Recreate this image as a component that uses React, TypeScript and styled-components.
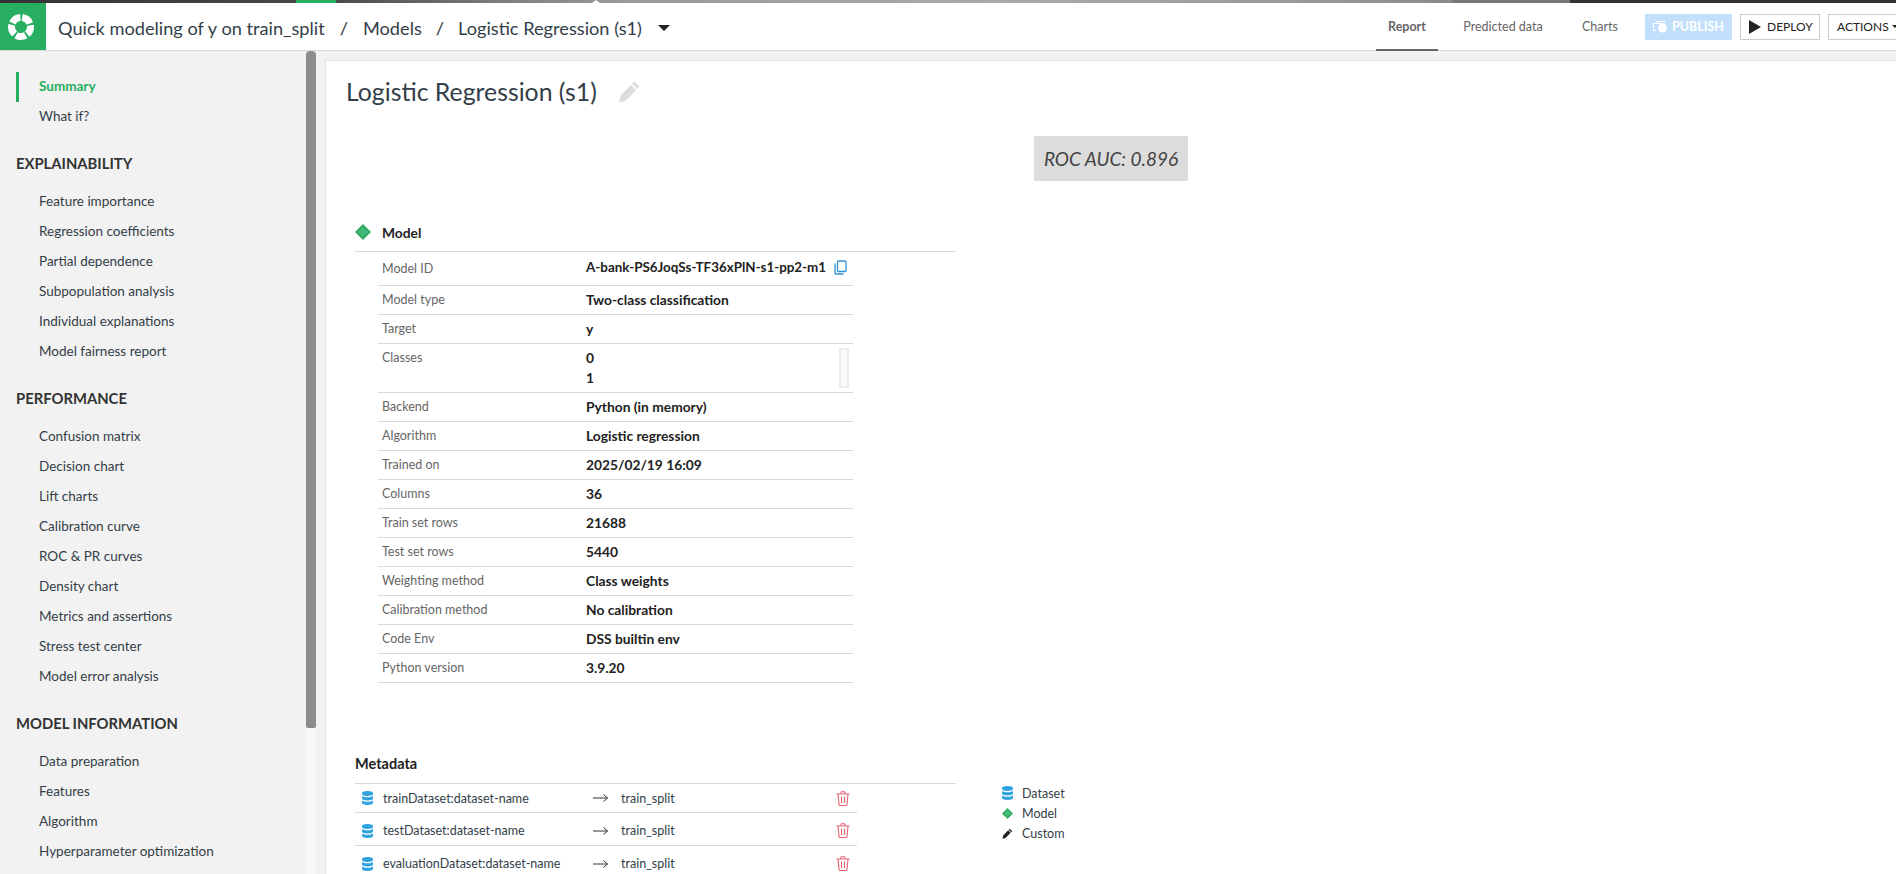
import React from "react";
import styled, { createGlobalStyle } from "styled-components";

const FONT = `"Lato", "Noto Sans", "Liberation Sans", sans-serif`;

const Global = createGlobalStyle`
  html, body { margin: 0; padding: 0; height: 100%; overflow: hidden; background: #f2f2f2; }
  body { font-family: ${FONT}; color: #333e48; }
  * { box-sizing: border-box; }
`;

const Page = styled.div`
  width: 1896px;
  height: 874px;
  display: flex;
  flex-direction: column;
  overflow: hidden;
`;

const TopStrip = styled.div`
  height: 3px;
  flex: none;
  position: relative;
  background: linear-gradient(
    90deg,
    #333 0,
    #4a4a4a 336px,
    #7d7d7d 500px,
    #999 620px,
    #aaa 1000px,
    #999 1300px,
    #8a8a8a 1452px,
    #777 1452px,
    #777 1570px,
    #333 1570px,
    #333 100%
  );
`;

const StripGreen = styled.div`
  position: absolute;
  left: 296px;
  top: 0;
  width: 40px;
  height: 3px;
  background: #28ae60;
`;

const StripNotch = styled.div`
  position: absolute;
  left: 592px;
  top: 0;
  width: 0;
  height: 0;
  border-left: 4px solid transparent;
  border-right: 4px solid transparent;
  border-bottom: 3px solid #fff;
`;

const Header = styled.header`
  height: 48px;
  flex: none;
  background: #fff;
  border-bottom: 1px solid #d9d9d9;
  display: flex;
  align-items: stretch;
`;

const Logo = styled.div`
  width: 46px;
  background: #28ae60;
  display: flex;
  align-items: center;
  justify-content: center;
  padding-right: 4px;
`;

const Crumbs = styled.div`
  display: flex;
  align-items: center;
  margin-left: 12px;
  padding-top: 2px;
  font-size: 18.2px;
  color: #333e48;
`;

const Sep = styled.span<{ $m: number }>`
  margin: 0 ${(p) => p.$m}px;
`;

const Caret = styled.span`
  width: 0;
  height: 0;
  margin-left: 16px;
  border-left: 6px solid transparent;
  border-right: 6px solid transparent;
  border-top: 6px solid #222;
`;

const Spacer = styled.div`
  flex: 1;
`;

const Tabs = styled.nav`
  display: flex;
  align-items: stretch;
  height: 48px;
  margin-bottom: -1px;
  position: relative;
`;

const Tab = styled.div<{ $active?: boolean; $w: number }>`
  display: flex;
  align-items: center;
  justify-content: center;
  width: ${(p) => p.$w}px;
  font-size: 12.5px;
  font-weight: ${(p) => (p.$active ? 700 : 400)};
  color: #666;
  border-bottom: 2px solid ${(p) => (p.$active ? "#666" : "transparent")};
`;

const Actions = styled.div`
  display: flex;
  align-items: center;
  gap: 8px;
  margin-left: 13px;
  width: 251px;
  flex: none;
  overflow: hidden;
`;

const Publish = styled.div`
  width: 87px;
  height: 26px;
  flex: none;
  background: #c2dffc;
  color: #fff;
  font-size: 12.5px;
  font-weight: 700;
  display: flex;
  align-items: center;
  justify-content: center;
  gap: 4px;
`;

const OutlineButton = styled.div<{ $w: number }>`
  width: ${(p) => p.$w}px;
  height: 26px;
  flex: none;
  border: 1px solid #ccc;
  background: #fff;
  color: #222;
  font-size: 12px;
  display: flex;
  align-items: center;
  gap: 6px;
  padding-left: 8px;
  white-space: nowrap;
`;

const SmallCaret = styled.span`
  width: 0;
  height: 0;
  margin-left: -3px;
  border-left: 3px solid transparent;
  border-right: 3px solid transparent;
  border-top: 3px solid #222;
`;

const Body = styled.div`
  flex: 1;
  min-height: 0;
  display: flex;
`;

const Sidebar = styled.aside`
  width: 316px;
  flex: none;
  position: relative;
  padding: 21px 0 0 16px;
  overflow: hidden;
`;

const ScrollThumb = styled.div`
  position: absolute;
  top: 0;
  right: 0;
  width: 10px;
  height: 677px;
  background: #8c8c8c;
  border-radius: 4px 4px 2px 2px;
`;

const ScrollTrack = styled.div`
  position: absolute;
  top: 677px;
  bottom: 0;
  right: 0;
  width: 10px;
  background: #f8f8f8;
`;

const NavItem = styled.div<{ $active?: boolean }>`
  height: 30px;
  display: flex;
  align-items: center;
  padding: 0 0 2px 20px;
  font-size: 13.5px;
  font-weight: ${(p) => (p.$active ? 700 : 400)};
  color: ${(p) => (p.$active ? "#28ae60" : "#333e48")};
  border-left: 3px solid ${(p) => (p.$active ? "#28ae60" : "transparent")};
`;

const NavGroup = styled.div`
  margin-bottom: 19px;
`;

const NavTitle = styled.div`
  font-size: 14.8px;
  font-weight: 700;
  color: #333;
  height: 24px;
  line-height: 24px;
  margin-bottom: 12px;
`;

const Main = styled.main`
  flex: 1;
  min-width: 0;
  margin: 9px 0 0 9px;
  background: #fff;
  border-left: 1px solid #e3e3e3;
  border-top: 1px solid #e3e3e3;
  padding: 0 0 0 20px;
  overflow: hidden;
  position: relative;
`;

const TitleRow = styled.div`
  display: flex;
  align-items: center;
  gap: 21px;
  height: 49px;
  margin-top: 6px;
`;

const Title = styled.h1`
  margin: 0;
  font-size: 24.8px;
  font-weight: 400;
  color: #333e48;
`;

const ScoreRow = styled.div`
  display: flex;
  margin: 20px 0 0 688px;
`;

const Score = styled.div`
  width: 154px;
  height: 45px;
  background: #dcdcdc;
  display: flex;
  align-items: center;
  justify-content: center;
  font-style: italic;
  font-size: 19px;
  color: #444;
`;

const Section = styled.section`
  margin: 36px 0 0 9px;
  width: 601px;
`;

const SectionHead = styled.div`
  display: flex;
  align-items: center;
  gap: 11px;
  height: 35px;
  border-bottom: 1px solid #d9d9d9;
  font-size: 13.8px;
  font-weight: 700;
  color: #222;
  padding-bottom: 4px;
`;

const InfoTable = styled.div`
  margin-left: 23px;
  width: 475px;
`;

const InfoRow = styled.div<{ $h?: number; $top?: number }>`
  display: grid;
  grid-template-columns: 121px 1fr;
  height: ${(p) => p.$h ?? 29}px;
  border-bottom: 1px solid #d9d9d9;
  padding: ${(p) => p.$top ?? 6}px 0 0 4px;
  font-size: 12.5px;
  line-height: 16px;
  position: relative;
`;

const InfoLabel = styled.div`
  color: #666;
  width: 121px;
  white-space: nowrap;
`;

const InfoValue = styled.div`
  font-size: 13.8px;
  font-weight: 700;
  color: #222;
  margin: -2px 0 0 83px;
  white-space: nowrap;
  display: flex;
  flex-direction: column;
  line-height: 20px;
`;

const InlineValue = styled.span`
  display: flex;
  align-items: center;
  gap: 8px;
  margin-top: -2px;
  font-size: 13.4px;
`;

const MiniScroll = styled.div`
  position: absolute;
  right: 4px;
  top: 4px;
  width: 10px;
  height: 40px;
  border: 2px solid #ececec;
  background: #fbfbfb;
`;

const MetaSection = styled.section`
  margin: 71px 0 0 9px;
  display: flex;
  align-items: flex-start;
`;

const MetaMain = styled.div`
  width: 601px;
  flex: none;
`;

const MetaTitle = styled.div`
  font-size: 14.5px;
  font-weight: 700;
  color: #222;
  height: 30px;
  line-height: 20px;
  border-bottom: 1px solid #d9d9d9;
`;

const MetaRow = styled.div<{ $first?: boolean }>`
  width: 502px;
  height: ${(p) => (p.$first ? 29 : 33)}px;
  display: flex;
  align-items: center;
  border-bottom: 1px solid #d9d9d9;
  padding: ${(p) => (p.$first ? 0 : 3)}px 0 0 7px;
  font-size: 12.5px;
  color: #333e48;
`;

const MetaKey = styled.div`
  width: 210px;
  margin-left: 10px;
  white-space: nowrap;
`;

const MetaVal = styled.div`
  margin-left: 13px;
  width: 215px;
`;

const Legend = styled.div`
  margin: 29px 0 0 46px;
  display: flex;
  flex-direction: column;
`;

const LegendItem = styled.div`
  height: 20px;
  display: flex;
  align-items: center;
  gap: 9px;
  font-size: 12.5px;
  color: #333e48;
`;

const Db = () => (
  <svg width="11" height="14" viewBox="0 0 10 14" preserveAspectRatio="none" style={{ flex: "none" }}>
    <path d="M0 2C0 .7 2.200 0 5 0s5 .7 5 2v1c0 1.200-2.200 2-5 2S0 4.200 0 3z" fill="#2fa3e0" />
    <path d="M0 5c1 .9 3 1.300 5 1.300S9 5.900 10 5v2.500c0 1.200-2.200 2-5 2s-5-.8-5-2z" fill="#2fa3e0" />
    <path d="M0 9.500c1 .9 3 1.300 5 1.300s4-.4 5-1.300V12c0 1.200-2.200 2-5 2s-5-.8-5-2z" fill="#2fa3e0" />
  </svg>
);

const Diamond = ({ size = 16 }: { size?: number }) => (
  <svg width={size} height={size} viewBox="0 0 16 16" style={{ flex: "none" }}>
    <path d="M8 0l8 8-8 8-8-8z" fill="#2fae63" />
    <path d="M8 3l5 5-5 5-5-5z" fill="#45b978" />
  </svg>
);

const Trash = () => (
  <svg width="14" height="15" viewBox="0 0 14 15" fill="none" stroke="#e8606f" strokeWidth="1.100" style={{ flex: "none" }}>
    <path d="M.5 3h13M5 3V1.500C5 1 5.300.7 5.800.7h2.400c.5 0 .8.300.8.800V3M2 3l1 10.200c0 .8.500 1.300 1.200 1.300h5.600c.7 0 1.200-.5 1.200-1.300L12 3M5.500 5.500V12M8.500 5.500V12" />
  </svg>
);

const Arrow = () => (
  <svg width="15" height="10" viewBox="0 0 15 10" fill="none" stroke="#333" strokeWidth="1" style={{ flex: "none" }}>
    <path d="M0 5h14.500M10.500 1.500L14.500 5l-4 3.500" />
  </svg>
);

const Pencil = ({ size = 23, color = "#dcdcdc" }: { size?: number; color?: string }) => (
  <svg width={size} height={size} viewBox="0 0 22 22" style={{ flex: "none" }}>
    <path d="M15.500 1.500l5 5-2 2-5-5zM12.300 4.700l5 5L7 20l-6 1.500L2.300 15z" fill={color} />
  </svg>
);

const Copy = () => (
  <svg width="13" height="15" viewBox="0 0 13 15" fill="none" stroke="#2f8fd6" strokeWidth="1.300" style={{ flex: "none" }}>
    <rect x="3.500" y="1" width="8.500" height="10.500" rx="1" />
    <path d="M1 3.500V13c0 .6.400 1 1 1h7.500" />
  </svg>
);

const LogoMark = () => (
  <svg width="26" height="26" viewBox="0 0 26 26" fill="none" stroke="#fff" strokeWidth="7">
    <circle cx="13" cy="13" r="9.500" strokeDasharray="10 1.940" strokeDashoffset="2" />
  </svg>
);

const PublishIcon = () => (
  <svg width="15" height="13" viewBox="0 0 15 13" fill="#fff">
    <path d="M0 3h10v1H1v6h2v1H0z" />
    <path d="M3 1h9v2h-1V2H4v1H3z" />
    <circle cx="9.500" cy="8" r="4.500" />
  </svg>
);

const Play = () => (
  <svg width="12" height="14" viewBox="0 0 12 14" fill="#222" style={{ flex: "none" }}>
    <path d="M0 0l12 7-12 7z" />
  </svg>
);

const nav: { title: string; items: string[] }[] = [
  {
    title: "EXPLAINABILITY",
    items: [
      "Feature importance",
      "Regression coefficients",
      "Partial dependence",
      "Subpopulation analysis",
      "Individual explanations",
      "Model fairness report",
    ],
  },
  {
    title: "PERFORMANCE",
    items: [
      "Confusion matrix",
      "Decision chart",
      "Lift charts",
      "Calibration curve",
      "ROC & PR curves",
      "Density chart",
      "Metrics and assertions",
      "Stress test center",
      "Model error analysis",
    ],
  },
  {
    title: "MODEL INFORMATION",
    items: ["Data preparation", "Features", "Algorithm", "Hyperparameter optimization"],
  },
];

const info: [string, string][] = [
  ["Model type", "Two-class classification"],
  ["Target", "y"],
];

const info2: [string, string][] = [
  ["Backend", "Python (in memory)"],
  ["Algorithm", "Logistic regression"],
  ["Trained on", "2025/02/19 16:09"],
  ["Columns", "36"],
  ["Train set rows", "21688"],
  ["Test set rows", "5440"],
  ["Weighting method", "Class weights"],
  ["Calibration method", "No calibration"],
  ["Code Env", "DSS builtin env"],
  ["Python version", "3.9.20"],
];

const meta = ["trainDataset:dataset-name", "testDataset:dataset-name", "evaluationDataset:dataset-name"];

export default function App() {
  return (
    <Page>
      <Global />
      <TopStrip>
        <StripGreen />
        <StripNotch />
      </TopStrip>
      <Header>
        <Logo>
          <LogoMark />
        </Logo>
        <Crumbs>
          <span>Quick modeling of y on train_split</span>
          <Sep $m={15}>/</Sep>
          <span>Models</span>
          <Sep $m={14}>/</Sep>
          <span>Logistic Regression (s1)</span>
          <Caret />
        </Crumbs>
        <Spacer />
        <Tabs>
          <Tab $active $w={62}>Report</Tab>
          <Tab $w={130}>Predicted data</Tab>
          <Tab $w={64}>Charts</Tab>
        </Tabs>
        <Actions>
          <Publish>
            <PublishIcon />
            PUBLISH
          </Publish>
          <OutlineButton $w={80}>
            <Play />
            DEPLOY
          </OutlineButton>
          <OutlineButton $w={72}>
            ACTIONS
            <SmallCaret />
          </OutlineButton>
        </Actions>
      </Header>
      <Body>
        <Sidebar>
          <NavGroup>
            <NavItem $active>Summary</NavItem>
            <NavItem>What if?</NavItem>
          </NavGroup>
          {nav.map((g) => (
            <NavGroup key={g.title}>
              <NavTitle>{g.title}</NavTitle>
              {g.items.map((i) => (
                <NavItem key={i}>{i}</NavItem>
              ))}
            </NavGroup>
          ))}
          <ScrollThumb />
          <ScrollTrack />
        </Sidebar>
        <Main>
          <TitleRow>
            <Title>Logistic Regression (s1)</Title>
            <Pencil />
          </TitleRow>
          <ScoreRow>
            <Score>ROC AUC: 0.896</Score>
          </ScoreRow>
          <Section>
            <SectionHead>
              <Diamond />
              Model
            </SectionHead>
            <InfoTable>
              <InfoRow $h={34} $top={9}>
                <InfoLabel>Model ID</InfoLabel>
                <InfoValue>
                  <InlineValue>
                    A-bank-PS6JoqSs-TF36xPlN-s1-pp2-m1
                    <Copy />
                  </InlineValue>
                </InfoValue>
              </InfoRow>
              {info.map(([k, v]) => (
                <InfoRow key={k}>
                  <InfoLabel>{k}</InfoLabel>
                  <InfoValue>{v}</InfoValue>
                </InfoRow>
              ))}
              <InfoRow $h={49}>
                <InfoLabel>Classes</InfoLabel>
                <InfoValue>
                  <span>0</span>
                  <span>1</span>
                </InfoValue>
                <MiniScroll />
              </InfoRow>
              {info2.map(([k, v]) => (
                <InfoRow key={k}>
                  <InfoLabel>{k}</InfoLabel>
                  <InfoValue>{v}</InfoValue>
                </InfoRow>
              ))}
            </InfoTable>
          </Section>
          <MetaSection>
            <MetaMain>
              <MetaTitle>Metadata</MetaTitle>
              {meta.map((m, i) => (
                <MetaRow key={m} $first={i === 0}>
                  <Db />
                  <MetaKey>{m}</MetaKey>
                  <Arrow />
                  <MetaVal>train_split</MetaVal>
                  <Trash />
                </MetaRow>
              ))}
            </MetaMain>
            <Legend>
              <LegendItem>
                <Db />
                Dataset
              </LegendItem>
              <LegendItem>
                <Diamond size={11} />
                Model
              </LegendItem>
              <LegendItem>
                <Pencil size={11} color="#222" />
                Custom
              </LegendItem>
            </Legend>
          </MetaSection>
        </Main>
      </Body>
    </Page>
  );
}
